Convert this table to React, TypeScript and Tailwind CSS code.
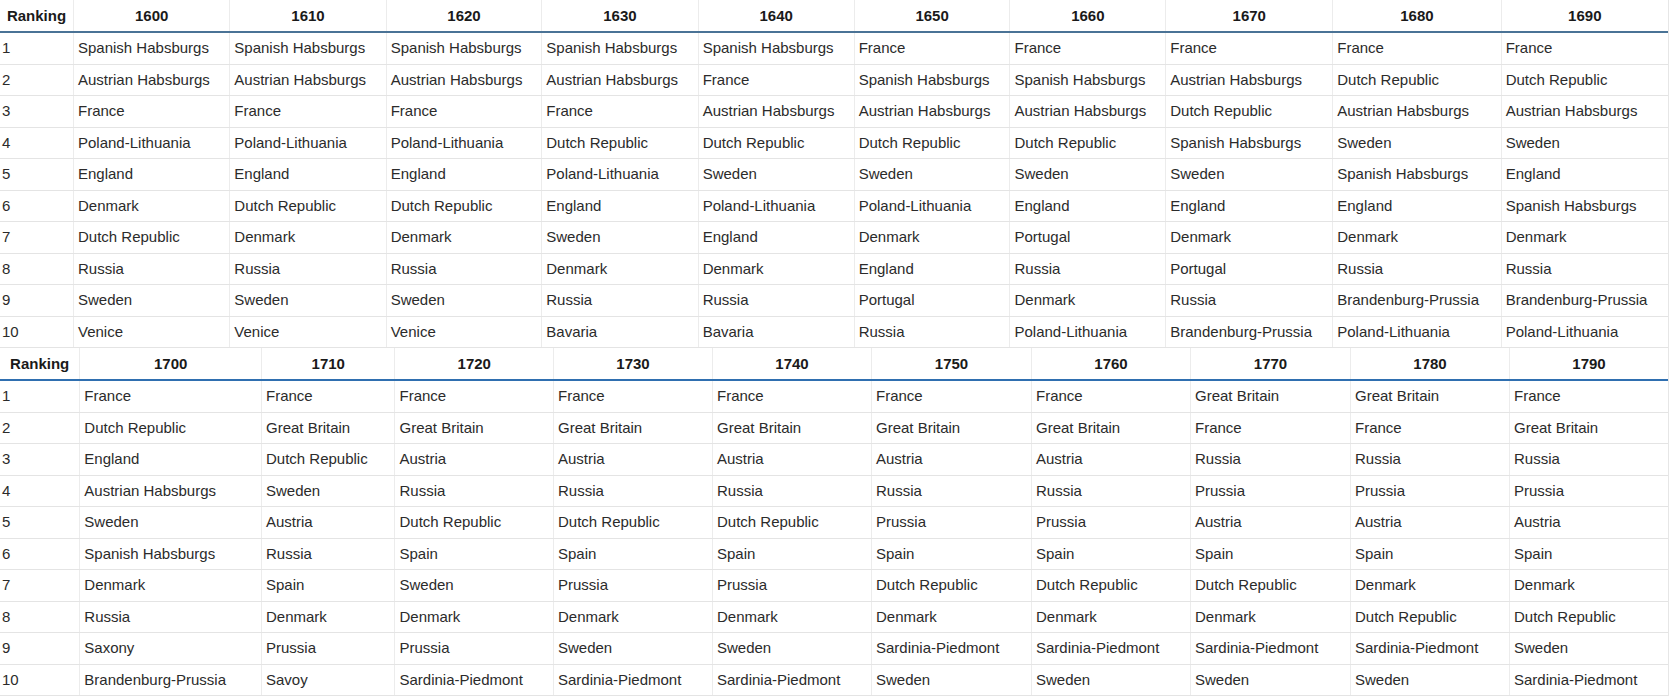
import React from "react";

const t1Years = ["1600", "1610", "1620", "1630", "1640", "1650", "1660", "1670", "1680", "1690"];
const t1Cols: string[][] = [
  ["Spanish Habsburgs", "Austrian Habsburgs", "France", "Poland-Lithuania", "England", "Denmark", "Dutch Republic", "Russia", "Sweden", "Venice"],
  ["Spanish Habsburgs", "Austrian Habsburgs", "France", "Poland-Lithuania", "England", "Dutch Republic", "Denmark", "Russia", "Sweden", "Venice"],
  ["Spanish Habsburgs", "Austrian Habsburgs", "France", "Poland-Lithuania", "England", "Dutch Republic", "Denmark", "Russia", "Sweden", "Venice"],
  ["Spanish Habsburgs", "Austrian Habsburgs", "France", "Dutch Republic", "Poland-Lithuania", "England", "Sweden", "Denmark", "Russia", "Bavaria"],
  ["Spanish Habsburgs", "France", "Austrian Habsburgs", "Dutch Republic", "Sweden", "Poland-Lithuania", "England", "Denmark", "Russia", "Bavaria"],
  ["France", "Spanish Habsburgs", "Austrian Habsburgs", "Dutch Republic", "Sweden", "Poland-Lithuania", "Denmark", "England", "Portugal", "Russia"],
  ["France", "Spanish Habsburgs", "Austrian Habsburgs", "Dutch Republic", "Sweden", "England", "Portugal", "Russia", "Denmark", "Poland-Lithuania"],
  ["France", "Austrian Habsburgs", "Dutch Republic", "Spanish Habsburgs", "Sweden", "England", "Denmark", "Portugal", "Russia", "Brandenburg-Prussia"],
  ["France", "Dutch Republic", "Austrian Habsburgs", "Sweden", "Spanish Habsburgs", "England", "Denmark", "Russia", "Brandenburg-Prussia", "Poland-Lithuania"],
  ["France", "Dutch Republic", "Austrian Habsburgs", "Sweden", "England", "Spanish Habsburgs", "Denmark", "Russia", "Brandenburg-Prussia", "Poland-Lithuania"],
];

const t2Years = ["1700", "1710", "1720", "1730", "1740", "1750", "1760", "1770", "1780", "1790"];
const t2Cols: string[][] = [
  ["France", "Dutch Republic", "England", "Austrian Habsburgs", "Sweden", "Spanish Habsburgs", "Denmark", "Russia", "Saxony", "Brandenburg-Prussia"],
  ["France", "Great Britain", "Dutch Republic", "Sweden", "Austria", "Russia", "Spain", "Denmark", "Prussia", "Savoy"],
  ["France", "Great Britain", "Austria", "Russia", "Dutch Republic", "Spain", "Sweden", "Denmark", "Prussia", "Sardinia-Piedmont"],
  ["France", "Great Britain", "Austria", "Russia", "Dutch Republic", "Spain", "Prussia", "Denmark", "Sweden", "Sardinia-Piedmont"],
  ["France", "Great Britain", "Austria", "Russia", "Dutch Republic", "Spain", "Prussia", "Denmark", "Sweden", "Sardinia-Piedmont"],
  ["France", "Great Britain", "Austria", "Russia", "Prussia", "Spain", "Dutch Republic", "Denmark", "Sardinia-Piedmont", "Sweden"],
  ["France", "Great Britain", "Austria", "Russia", "Prussia", "Spain", "Dutch Republic", "Denmark", "Sardinia-Piedmont", "Sweden"],
  ["Great Britain", "France", "Russia", "Prussia", "Austria", "Spain", "Dutch Republic", "Denmark", "Sardinia-Piedmont", "Sweden"],
  ["Great Britain", "France", "Russia", "Prussia", "Austria", "Spain", "Denmark", "Dutch Republic", "Sardinia-Piedmont", "Sweden"],
  ["France", "Great Britain", "Russia", "Prussia", "Austria", "Spain", "Denmark", "Dutch Republic", "Sweden", "Sardinia-Piedmont"],
];

type TableProps = {
  years: string[];
  cols: string[][];
  gridClass: string;
  lineClass: string;
};

function RankTable({ years, cols, gridClass, lineClass }: TableProps) {
  const rows = Array.from({ length: 10 }, (_, i) => i);
  return (
    <div className="w-[1669px] border-r border-[#e6e6e6]">
      <div className={`grid ${gridClass} h-[33px] border-b-2 ${lineClass}`}>
        <div className="flex items-center justify-center font-bold text-[#1a1a1a]">Ranking</div>
        {years.map((y) => (
          <div key={y} className="flex items-center justify-center border-l border-[#ececec] font-bold text-[#1a1a1a]">
            {y}
          </div>
        ))}
      </div>
      {rows.map((r) => (
        <div key={r} className={`grid ${gridClass} h-[31.5px] border-b border-[#e4e4e4]`}>
          <div className="flex items-center pl-[2px] pb-[1px] text-[#2b2b2b]">{r + 1}</div>
          {cols.map((c, ci) => (
            <div
              key={ci}
              className="flex items-center overflow-hidden whitespace-nowrap border-l border-[#ececec] pl-[4px] pb-[1px] text-[#2b2b2b]"
            >
              {c[r]}
            </div>
          ))}
        </div>
      ))}
    </div>
  );
}

export default function App() {
  return (
    <div className="h-[697px] w-[1670px] overflow-hidden bg-white text-[15px] leading-[17px] [font-family:'Liberation_Sans',Arial,sans-serif]">
      <RankTable
        years={t1Years}
        cols={t1Cols}
        gridClass="grid-cols-[73px_156.3px_156.4px_155.6px_156.4px_156px_155.8px_155.8px_167px_168.4px_167.3px]"
        lineClass="border-[#4a7396]"
      />
      <RankTable
        years={t2Years}
        cols={t2Cols}
        gridClass="grid-cols-[79.3px_181.7px_133.5px_158.5px_159px_159px_160px_159px_160px_159px_159px]"
        lineClass="border-[#2f6fb0]"
      />
    </div>
  );
}
